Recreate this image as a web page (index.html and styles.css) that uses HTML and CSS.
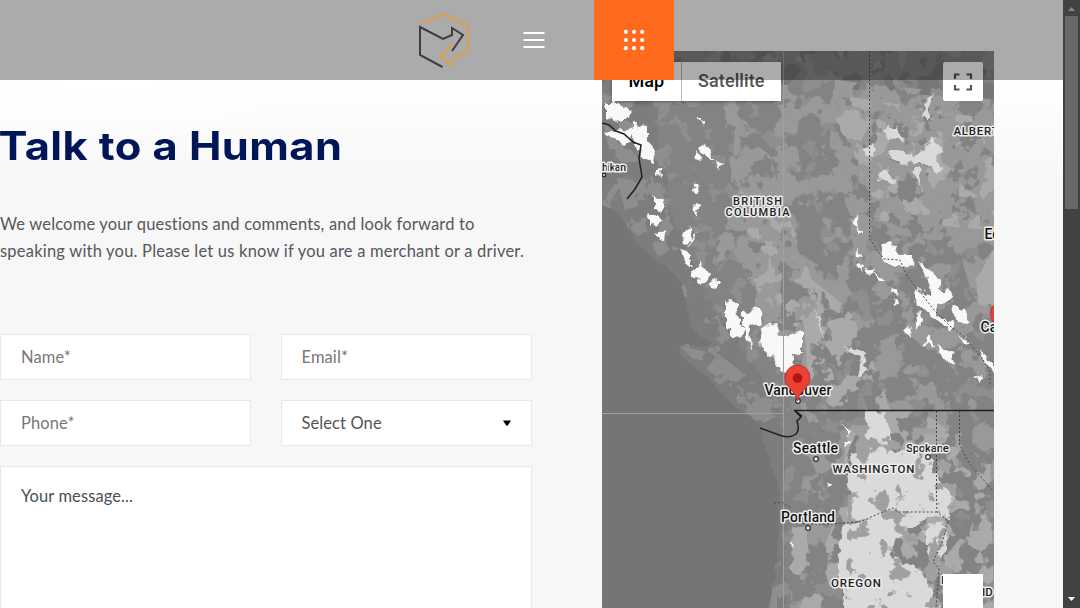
FILE: index.html
```html
<!DOCTYPE html>
<html lang="en">
<head>
<meta charset="utf-8">
<title>Talk to a Human</title>
<link rel="stylesheet" href="styles.css">
</head>
<body>
<div class="viewport">
  <main class="page">
    <section class="contact">
      <h1 class="title">Talk to a Human</h1>
      <p class="intro"><span class="intro-a">We welcome your questions and comments, and look forward to</span><br><span class="intro-b">speaking with you. Please let us know if you are a merchant or a driver.</span></p>
      <form class="form">
        <div class="field name">Name*</div>
        <div class="field email">Email*</div>
        <div class="field phone">Phone*</div>
        <div class="field select"><span>Select One</span><svg width="8" height="6" viewBox="0 0 8 6"><path d="M0 .5H8L4.8 5.5H3.2Z"/></svg></div>
        <div class="field message">Your message...</div>
      </form>
    </section>
    <section class="map">
      <svg class="terrain" width="392" height="557" viewBox="602 51 392 557">
        <defs>
          <filter id="mottle" filterUnits="userSpaceOnUse" x="602" y="51" width="392" height="557" color-interpolation-filters="sRGB">
            <feTurbulence type="fractalNoise" baseFrequency=".04" numOctaves="4" seed="8"/>
            <feColorMatrix values="0 0 0 0 0 0 0 0 0 0 0 0 0 0 0 20 0 0 0 -10.4" result="m"/>
            <feComposite in="SourceGraphic" in2="m" operator="in"/>
          </filter>
          <filter id="dense" filterUnits="userSpaceOnUse" x="602" y="51" width="392" height="557" color-interpolation-filters="sRGB">
            <feTurbulence type="fractalNoise" baseFrequency=".05" numOctaves="4" seed="21"/>
            <feColorMatrix values="0 0 0 0 0 0 0 0 0 0 0 0 0 0 0 0 20 0 0 -8.8" result="m"/>
            <feComposite in="SourceGraphic" in2="m" operator="in"/>
          </filter>
          <filter id="sparse" filterUnits="userSpaceOnUse" x="602" y="51" width="392" height="557" color-interpolation-filters="sRGB">
            <feTurbulence type="fractalNoise" baseFrequency=".055" numOctaves="4" seed="33"/>
            <feColorMatrix values="0 0 0 0 0 0 0 0 0 0 0 0 0 0 0 20 0 0 0 -11.6" result="m"/>
            <feComposite in="SourceGraphic" in2="m" operator="in"/>
          </filter>
          <filter id="rough" filterUnits="userSpaceOnUse" x="592" y="41" width="412" height="577" color-interpolation-filters="sRGB">
            <feTurbulence type="fractalNoise" baseFrequency=".11" numOctaves="2" seed="4" result="n"/>
            <feDisplacementMap in="SourceGraphic" in2="n" scale="11" xChannelSelector="R" yChannelSelector="G"/>
          </filter>
          <clipPath id="land"><path d="M602 51H994V608H768L776 560 779 520 777 485 768 458 760 430 751 417 736 408 722 394 708 379 691 364 679 354 679 346 688 344 704 346 712 343 699 336 691 326 688 311 684 295 680 281 666 266 656 262 648 253 634 240 626 225 618 212 602 205Z"/></clipPath>
        </defs>
        <rect x="602" y="51" width="392" height="557" fill="#757575"/>
        <g clip-path="url(#land)">
          <g filter="url(#rough)">
            <path class="t-shelf" d="M592 41H1010V620H768L776 560 779 520 777 485 768 458 760 430 736 410 708 381 691 366 679 354 679 346 712 346 691 330 684 295 680 281 656 264 634 242 618 214 592 195Z"/>
            <path class="t-land" d="M645 41H1010V620H786L783 500 785 460 780 410 750 360 708 300 670 210Z"/>
          </g>
          <path class="t-dark" filter="url(#mottle)" d="M602 51H994V110L860 90 790 140 740 100 602 110Z"/>
          <path class="t-soft" filter="url(#sparse)" d="M602 51H994V608H770L790 430 680 350 640 240 602 205Z"/>
          <path class="t-soft" filter="url(#dense)" d="M602 120 650 170 660 200 625 210ZM680 346 720 355 790 410 760 425Z"/>
          <path class="t-mid" filter="url(#dense)" d="M835 80 930 90 994 100V230L960 245 900 235 850 215 828 160ZM735 130 770 155 790 230 815 290 830 350 800 330 770 320 742 270 712 265 730 190ZM985 235H994V330L975 305 962 260Z"/>
          <path class="t-mid" filter="url(#mottle)" d="M715 80 994 100V608H790L808 420 760 330Z"/>
          <path class="t-light" filter="url(#sparse)" d="M840 95 994 120V230L870 220ZM740 190 790 220 820 300 810 340 755 290Z"/>
          <path class="t-light" filter="url(#mottle)" d="M800 270 850 310 880 380 890 410 810 405ZM865 410H920L990 460 994 608H800L835 520 850 420Z"/>
          <g filter="url(#rough)">
            <path class="t-light" d="M826 322 850 317 858 332 851 346 832 344ZM836 118 852 108 868 125 860 142 846 140ZM978 275 990 255 1000 250V310L975 300ZM793 530 805 525 809 565 798 577 792 565Z"/>
            <path class="t-pale" d="M866 410 885 413 894 452 930 450 932 470 955 495 948 518 930 515 910 530 880 521 848 518 850 480 849 455 865 450ZM842 525 895 517 905 530 888 555 922 570 940 612H846L838 570ZM924 530 944 522 948 545 940 560 948 580 930 560Z"/>
            <path class="t-pale" d="M886 150 900 150 914 158 934 138 942 150 936 159 944 170 936 174 921 162 894 163ZM925 103 932 92 929 118 924 118ZM878 170 894 177 892 185 880 180ZM913 168 923 190 919 168ZM814 306 820 320 827 340 820 326ZM843 346 868 352 865 354 864 367 870 371 858 375 861 360ZM884 130 897 125 905 143 888 137ZM862 150 875 142 873 157Z"/>
          </g>
          <path class="t-forest" filter="url(#sparse)" d="M850 425 960 430 950 608H845Z"/>
        </g>
        <g class="snow" filter="url(#rough)">
          <path d="M606 102 618 102 632 111 622 124 606 118ZM606 131 622 129 634 130 629 144 610 138ZM633 124 648 126 648 140 656 149 654 164 642 157 632 145ZM655 175 661 167 662 178ZM654 196 665 200 663 211 654 210ZM651 211 662 219 652 226 648 218ZM654 234 666 229 664 240ZM682 250 690 252 690 265 684 261ZM698 147 707 143 712 158 704 157ZM697 150 704 162 697 157ZM716 159 724 167 718 169ZM697 118 704 118 703 126ZM697 183 692 193 698 198ZM694 205 700 207 695 214ZM683 231 691 226 692 241 684 245ZM700 228 694 242 688 247ZM692 270 702 262 710 275 702 285 693 278ZM709 285 718 280 718 288ZM726 300 737 303 740 318 744 331 738 340 726 327ZM744 311 758 307 761 322 750 328 752 348 744 332ZM760 328 776 325 782 337 802 331 802 355 792 354 795 369 782 372 775 356 762 350Z"/>
          <path d="M856 247 863 258 857 257ZM857 264 864 266 862 273ZM867 267 875 271 869 276ZM873 272 886 281 880 281ZM880 245 895 244 898 256 911 256 916 266 898 268 884 264ZM885 261 896 258 900 268ZM919 263 929 270 940 281 939 290 950 292 949 302 938 305 936 316 954 321 952 330 930 316 915 302 917 290 932 294 928 280ZM952 305 967 311 972 325 957 324ZM918 309 921 324 914 333ZM929 332 935 346 925 344ZM936 346 953 352 955 365 946 360ZM980 347 993 362 995 373 983 360ZM892 286 898 293 891 294ZM894 298 900 304 895 307ZM903 333 908 325 911 336ZM958 335 972 344 964 344ZM974 379 981 376 980 383ZM843 426 852 429 848 436ZM843 440 851 443 845 447ZM852 220 859 218 860 227ZM858 227 864 234 857 234ZM826 482 833 482 831 488ZM791 541 796 545 792 549Z"/>
        </g>
        <path class="tile" d="M783.5 51V608M602 413.500H783"/>
        <g class="border">
          <path d="M602 123 609 125 616 131 624 134 633 142 641 145 639 158 642 177 635 189 627 199"/>
          <path d="M794 410.500H994M795 411 801 417 797 421Q800 430 796 434 791 438 782 436L760 428M794 410 802 416"/>
        </g>
        <path class="dots" d="M869.500 51V238L877 250 884 259 900 260 907 276 920 292 934 310 950 326 966 338 982 358 990 371 990 386M936.500 411V500L937 512 948 521 943 540 933 562 939 568 936 608M959.500 411V445L969 463 994 492M774 503 782 502 790 507M803 524 830 524 842 523 860 522 880 513 893 508 898 512 940 512"/>
        <g class="labels">
          <text x="602" y="171" font-size="10.500" textLength="24">hikan</text>
          <text x="733" y="204.500" font-size="11" textLength="49">BRITISH</text>
          <text x="725.500" y="215.500" font-size="11" textLength="64">COLUMBIA</text>
          <text x="953.500" y="135" font-size="11.500" textLength="53">ALBERTA</text>
          <text class="city" x="984.500" y="239" font-size="14">Edmonton</text>
          <text class="city" x="764.500" y="395" font-size="14" textLength="67">Vancouver</text>
          <text class="city" x="793" y="452.500" font-size="14" textLength="45">Seattle</text>
          <text class="city" x="781" y="521.500" font-size="14" textLength="54">Portland</text>
          <text x="906" y="452" font-size="11.500" textLength="43">Spokane</text>
          <text x="832.500" y="473" font-size="11.500" textLength="82">WASHINGTON</text>
          <text x="831" y="586.500" font-size="11.500" textLength="50">OREGON</text>
          <text x="941" y="584" font-size="11.500">I</text>
          <text x="982" y="596" font-size="11.500">ID</text>
        </g>
        <g class="markers"><circle cx="816" cy="459" r="2.300"/><circle cx="808" cy="528" r="2.300"/><circle cx="928" cy="457" r="2.300"/><circle cx="798" cy="401" r="2.300"/><rect x="602.500" y="173.500" width="3" height="3"/></g>
        <g id="pin"><path fill="#ea4335" stroke="#c5221f" stroke-width=".8" d="M797.500 401C796 391 785 388 785 377.500A12.500 12.500 0 0 1 810 377.500C810 388 799 391 797.500 401Z"/><circle cx="797.500" cy="378" r="4.800" fill="#b31412"/></g>
        <use href="#pin" x="205.500" y="-64"/>
        <text class="city" x="980.500" y="332" font-size="14">Calgary</text>
      </svg>
      <div class="map-type"><span class="type-map">Map</span><span class="type-sat">Satellite</span></div>
      <div class="fullscreen"><svg width="20" height="18" viewBox="0 0 20 18"><path d="M2 6V1.500H6.500M13.500 1.500H18V6M18 12V16.500H13.500M6.500 16.500H2V12"/></svg></div>
      <div class="zoom-control"></div>
    </section>
  </main>
  <header class="header">
    <svg class="logo" width="54" height="58" viewBox="418 10 54 58">
      <path class="gold" d="M423 22.500 444 13 469 25V50L456 56.500 452 64 442 56 453 43"/>
      <path class="ink" d="M443.500 66 421 54V26L444 38 453 34V27L464 34 453 50"/>
    </svg>
    <svg class="burger" width="22" height="18" viewBox="0 0 22 18"><path d="M.5 2H21.500M.5 9H21.500M.5 16H21.500"/></svg>
    <div class="apps"><svg width="22" height="22" viewBox="0 0 22 22"><g fill="#fff"><circle cx="2.800" cy="2.800" r="2.100"/><circle cx="11" cy="2.800" r="2.100"/><circle cx="19.200" cy="2.800" r="2.100"/><circle cx="2.800" cy="11" r="2.100"/><circle cx="11" cy="11" r="2.100"/><circle cx="19.200" cy="11" r="2.100"/><circle cx="2.800" cy="19.200" r="2.100"/><circle cx="11" cy="19.200" r="2.100"/><circle cx="19.200" cy="19.200" r="2.100"/></g></svg></div>
  </header>
</div>
<aside class="scrollbar">
  <svg width="17" height="16" viewBox="0 0 17 16"><path fill="#858585" d="M5 11 8.500 7 12 11Z"/></svg>
  <div class="thumb"></div>
  <svg class="down" width="17" height="16" viewBox="0 0 17 16"><path fill="#fff" d="M5 5H12L8.500 9Z"/></svg>
</aside>
</body>
</html>
```
FILE: styles.css
```css
* { box-sizing: border-box; }
body { margin: 0; display: flex; width: 1080px; height: 608px; overflow: hidden; font-family: Lato, sans-serif; }
.viewport { position: relative; width: 1063px; height: 608px; overflow: hidden; }
.page {
  display: flex; gap: 70px; height: 608px;
  background: radial-gradient(ellipse 230px 80px at 110px 65px, #fff 30%, #fff0), linear-gradient(#fff 80px, #fdfdfd 105px, #f7f7f7 185px);
}
.contact { width: 532px; padding-top: 121px; }
.title { margin: 0; width: 300px; height: 50px; font: 700 39px/50px Inter, sans-serif; color: #001659; white-space: nowrap; letter-spacing: .4px; transform: scaleX(1.113); transform-origin: 14px 0; }
.intro { margin: 40px 0 0; font-size: 16.5px; line-height: 27px; color: #55585b; white-space: nowrap; }
.intro-a { letter-spacing: .17px; }
.intro-b { letter-spacing: .21px; }
.form { display: grid; grid-template-columns: 251px 251px; column-gap: 29.5px; row-gap: 20px; margin-top: 69px; font-size: 16.5px; letter-spacing: .1px; }
.field { height: 46px; padding: 0 20px; border: 1px solid #e8e8e8; background: #fff; color: #777; line-height: 45px; }
.select { display: flex; align-items: center; justify-content: space-between; color: #555; }
.message { grid-column: 1 / 3; height: 180px; padding-top: 7px; color: #495057; }
.map { position: relative; width: 392px; height: 557px; margin-top: 51px; }
.terrain { display: block; }
.t-shelf { fill: #7d7d7d; }
.t-land { fill: #838383; }
.t-dark { fill: #777; }
.t-soft { fill: #8e8e8e; }
.t-mid { fill: #999; }
.t-light { fill: #aaa; }
.t-pale { fill: #dadada; }
.t-forest { fill: #a0a0a0; }
.snow { fill: #f8f8f8; }
.tile { fill: none; stroke: #a0a0a0; }
.border { fill: none; stroke: #202020; stroke-width: 1.5; }
.dots { fill: none; stroke: #484848; stroke-dasharray: 2 2; }
.terrain text { font-family: Roboto, sans-serif; font-weight: 500; fill: #222; stroke: #eee; stroke-width: 3px; stroke-linejoin: round; paint-order: stroke; }
.terrain .city { fill: #111; }
.markers { fill: #eee; stroke: #333; stroke-width: 1.3; }
.map-type { position: absolute; left: 10px; top: 11px; display: flex; width: 169px; height: 39px; background: #fff; font: 500 18px/37px Roboto, sans-serif; box-shadow: 0 1px 3px #0005; }
.type-map { width: 70px; padding-left: 16.5px; border-right: 1px solid #bbb; color: #000; }
.type-sat { padding-left: 16px; color: #565656; letter-spacing: .1px; }
.fullscreen, .zoom-control { position: absolute; left: 341px; width: 40px; background: #fff; }
.fullscreen { top: 11px; height: 39px; padding: 10.5px 10px; border-radius: 2px; }
.fullscreen svg { display: block; fill: none; stroke: #555; stroke-width: 2.2; }
.zoom-control { top: 523px; height: 34px; }
.header { position: absolute; left: 0; top: 0; width: 1063px; height: 80px; display: flex; align-items: center; padding-left: 417px; background: rgba(0, 0, 0, .33); }
.logo { fill: none; stroke-width: 2; }
.gold { stroke: #dda048; }
.ink { stroke: #3d3d3d; }
.burger { margin-left: 52px; stroke: #fff; stroke-width: 2; }
.apps { display: flex; align-items: center; justify-content: center; width: 80px; height: 80px; margin-left: 49px; background: #ff6a1f; }
.scrollbar { display: flex; flex-direction: column; width: 17px; height: 608px; background: #424242; }
.scrollbar svg { flex: none; }
.thumb { width: 13px; height: 193px; margin: 0 2px; background: #686868; }
.down { margin-top: auto; }
```
